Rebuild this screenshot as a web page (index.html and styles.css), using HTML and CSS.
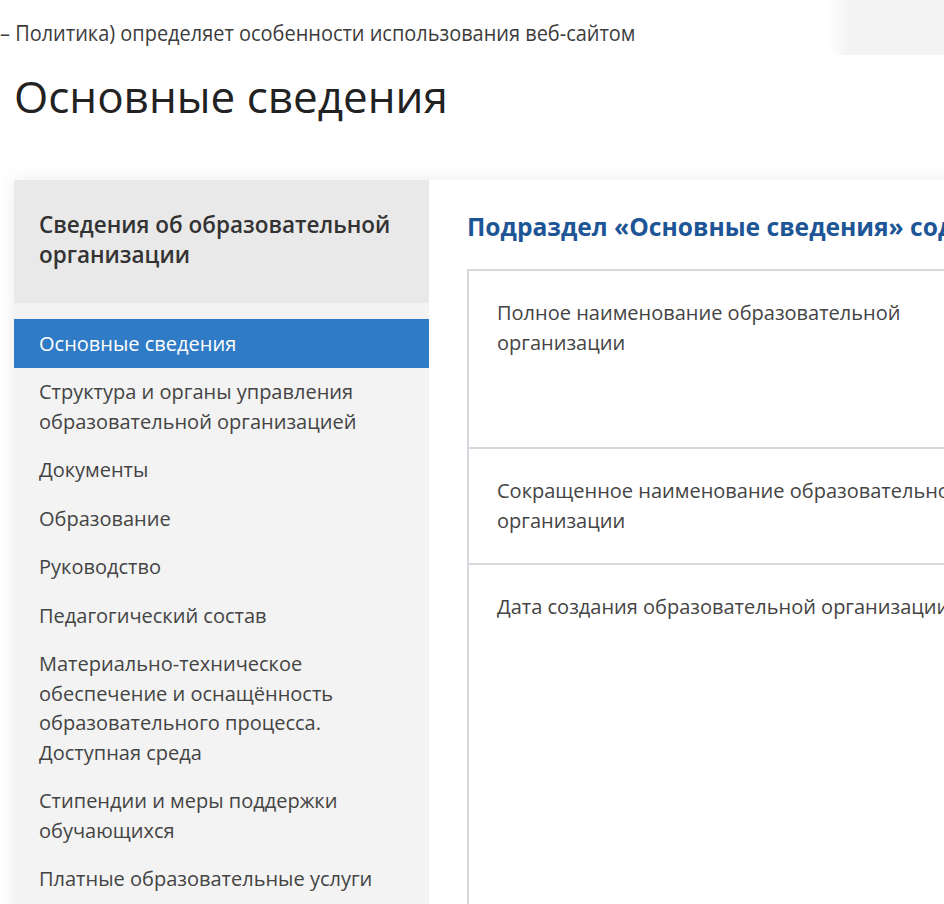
FILE: index.html
```html
<!DOCTYPE html>
<html lang="ru">

<head>
    <meta charset="UTF-8">
    <meta name="viewport" content="width=device-width, initial-scale=1.0">
    <title>Основные сведения</title>
    <link rel="stylesheet" href="styles.css">
</head>

<body>
    <div class="snippet">
        <div class="snippet-text">
            <p>– Политика) определяет особенности использования веб-сайтом</p>
        </div>
        <div class="snippet-side"></div>
    </div>

    <main class="page">
        <h1 class="page-title">Основные сведения</h1>

        <div class="info-card">
            <aside class="sidebar">
                <div class="sidebar-header">Сведения об образовательной организации</div>
                <nav class="sidebar-nav">
                    <a href="#" class="active">Основные сведения</a>
                    <a href="#">Структура и органы управления образовательной организацией</a>
                    <a href="#">Документы</a>
                    <a href="#">Образование</a>
                    <a href="#">Руководство</a>
                    <a href="#">Педагогический состав</a>
                    <a href="#">Материально-техническое обеспечение и оснащённость образовательного процесса. Доступная среда</a>
                    <a href="#">Стипендии и меры поддержки обучающихся</a>
                    <a href="#">Платные образовательные услуги</a>
                </nav>
            </aside>

            <section class="content">
                <h2 class="content-title">Подраздел «Основные сведения» содержит информацию</h2>

                <table class="info-table">
                    <tr class="row-full">
                        <td class="label">Полное наименование образовательной организации</td>
                        <td class="value"></td>
                    </tr>
                    <tr>
                        <td class="label">Сокращенное наименование образовательной организации</td>
                        <td class="value"></td>
                    </tr>
                    <tr class="row-date">
                        <td class="label">Дата создания образовательной организации</td>
                        <td class="value"></td>
                    </tr>
                </table>
            </section>
        </div>
    </main>
</body>

</html>
```

FILE: styles.css
```css
* {
    margin: 0;
    padding: 0;
    box-sizing: border-box;
}

body {
    font-family: 'Open Sans', 'Noto Sans', sans-serif;
    background: white;
    color: #444;
    overflow: hidden;
    width: 944px;
    height: 904px;
}

/* cut-off strip from the previous page */
.snippet {
    display: flex;
    height: 55px;
}

.snippet-text {
    flex: 1;
    overflow: hidden;
    padding-top: 18px;
}

.snippet-text p {
    font-size: 21px;
    line-height: 30px;
    color: #3c3c3c;
    white-space: nowrap;
    transform: scaleX(0.95);
    transform-origin: left center;
}

.snippet-side {
    width: 116px;
    background: linear-gradient(to right, #ffffff, #f3f3f3 22px);
}

.page {
    padding-left: 14px;
}

.page-title {
    font-size: 44px;
    font-weight: 400;
    color: #222;
    margin-top: 11px;
    line-height: 60px;
}

.info-card {
    display: flex;
    margin-top: 54px;
    width: 1500px;
    box-shadow: 0 0 18px rgba(0, 0, 0, 0.08);
}

.sidebar {
    width: 415px;
    flex-shrink: 0;
    background: #f3f3f3;
}

.sidebar-header {
    background: #e9e9e9;
    padding: 30px 25px 33px;
    font-size: 22.5px;
    font-weight: 600;
    line-height: 30px;
    color: #333;
}

.sidebar-nav {
    display: flex;
    flex-direction: column;
    margin-top: 16px;
    padding-bottom: 20px;
}

.sidebar-nav a {
    display: block;
    padding: 9.5px 25px;
    font-size: 20px;
    line-height: 29.5px;
    color: #444;
    text-decoration: none;
}

.sidebar-nav a.active {
    background: #2f7bc6;
    color: white;
}

.content {
    flex: 1;
    background: white;
    padding: 32px 38px 0;
}

.content-title {
    font-size: 24.6px;
    font-weight: 700;
    line-height: 30px;
    color: #1d5596;
    white-space: nowrap;
    margin-bottom: 27px;
}

.info-table {
    border-collapse: collapse;
    width: 1100px;
    border: 2px solid #d5d8dc;
}

.info-table td {
    vertical-align: top;
    border-top: 2px solid #d5d8dc;
    font-size: 20px;
    line-height: 30px;
    color: #444;
}

.info-table .label {
    width: 546px;
    padding: 27px 28px 27px 28px;
}

.row-full {
    height: 178px;
}

.row-date {
    height: 420px;
}
```
